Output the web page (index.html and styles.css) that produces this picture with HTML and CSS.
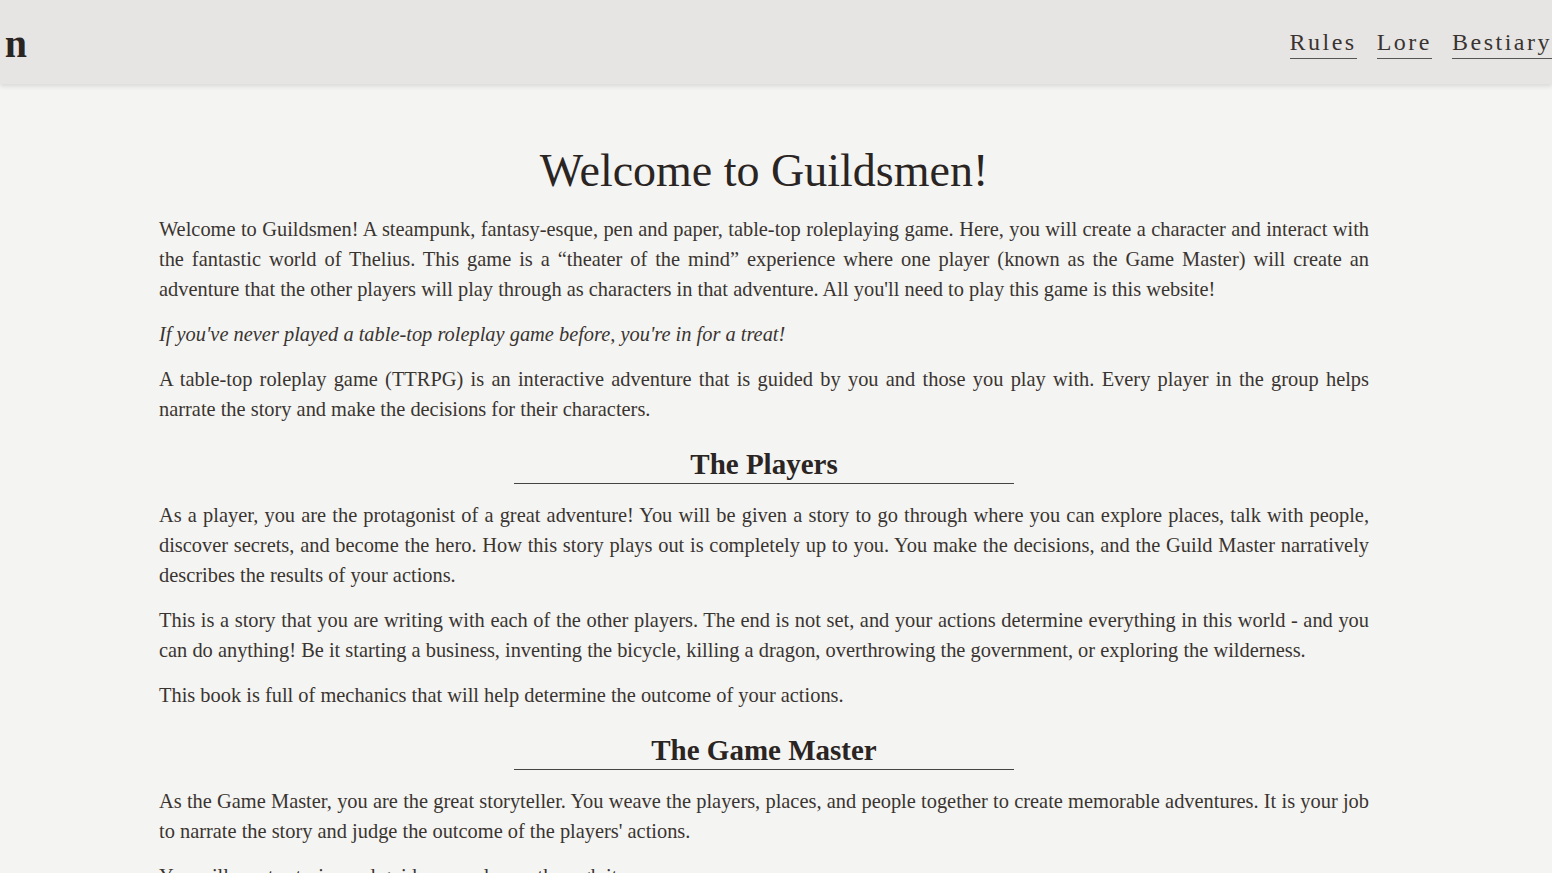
FILE: index.html
```html
<!DOCTYPE html>
<html lang="en">
<head>
<meta charset="utf-8">
<title>Guildsmen</title>
<link rel="stylesheet" href="styles.css">
</head>
<body>
<header class="topbar">
  <div class="brand"><span class="brand-text">Guildsmen</span></div>
  <nav class="nav">
    <a href="#" class="nav-link">Rules</a>
    <a href="#" class="nav-link">Lore</a>
    <a href="#" class="nav-link">Bestiary</a>
  </nav>
</header>
<main class="page">
  <h1 class="title">Welcome to Guildsmen!</h1>
  <p>Welcome to Guildsmen! A steampunk, fantasy-esque, pen and paper, table-top roleplaying game. Here, you will create a character and interact with the fantastic world of Thelius. This game is a “theater of the mind” experience where one player (known as the Game Master) will create an adventure that the other players will play through as characters in that adventure. All you'll need to play this game is this website!</p>
  <p><em>If you've never played a table-top roleplay game before, you're in for a treat!</em></p>
  <p>A table-top roleplay game (TTRPG) is an interactive adventure that is guided by you and those you play with. Every player in the group helps narrate the story and make the decisions for their characters.</p>
  <h2 class="section">The Players</h2>
  <p>As a player, you are the protagonist of a great adventure! You will be given a story to go through where you can explore places, talk with people, discover secrets, and become the hero. How this story plays out is completely up to you. You make the decisions, and the Guild Master narratively describes the results of your actions.</p>
  <p>This is a story that you are writing with each of the other players. The end is not set, and your actions determine everything in this world - and you can do anything! Be it starting a business, inventing the bicycle, killing a dragon, overthrowing the government, or exploring the wilderness.</p>
  <p>This book is full of mechanics that will help determine the outcome of your actions.</p>
  <h2 class="section">The Game Master</h2>
  <p>As the Game Master, you are the great storyteller. You weave the players, places, and people together to create memorable adventures. It is your job to narrate the story and judge the outcome of the players' actions.</p>
  <p>You will create stories and guide your players through it.</p>
</main>
</body>
</html>
```

FILE: styles.css
```css
html, body {
  margin: 0;
  padding: 0;
}
body {
  background: #f4f4f2;
  color: #3a3431;
  font-family: "Liberation Serif", "Times New Roman", serif;
  overflow: hidden;
}
.topbar {
  height: 84px;
  background: #e6e5e4;
  box-shadow: 0 2px 5px rgba(0, 0, 0, 0.12);
  display: flex;
  align-items: center;
  justify-content: space-between;
  position: relative;
  z-index: 1;
}
.brand {
  width: 22px;
  margin-left: 5px;
  overflow: hidden;
  display: flex;
  justify-content: flex-end;
  padding-top: 2px;
}
.brand-text {
  flex: none;
  font-size: 40px;
  font-weight: bold;
  color: #2a2523;
  white-space: nowrap;
}
.nav {
  display: flex;
  gap: 20px;
  margin-right: 0;
  padding-top: 1px;
}
.nav-link {
  font-size: 24px;
  letter-spacing: 2.5px;
  color: #3a3431;
  text-decoration: none;
  border-bottom: 1.5px solid #555;
  line-height: 31px;
  white-space: nowrap;
}
.page {
  padding: 57px 183px 0 159px;
}
.title {
  margin: 0 0 13px;
  text-align: center;
  font-size: 46px;
  font-weight: normal;
  color: #2a2523;
  line-height: 60px;
}
p {
  margin: 0 0 15px;
  font-size: 20.4px;
  line-height: 30px;
  text-align: justify;
}
em {
  font-style: italic;
}
.section {
  width: 500px;
  margin: 22px auto 16px;
  text-align: center;
  font-size: 29px;
  font-weight: bold;
  color: #2a2523;
  line-height: 37px;
  border-bottom: 1px solid #444;
}
```
